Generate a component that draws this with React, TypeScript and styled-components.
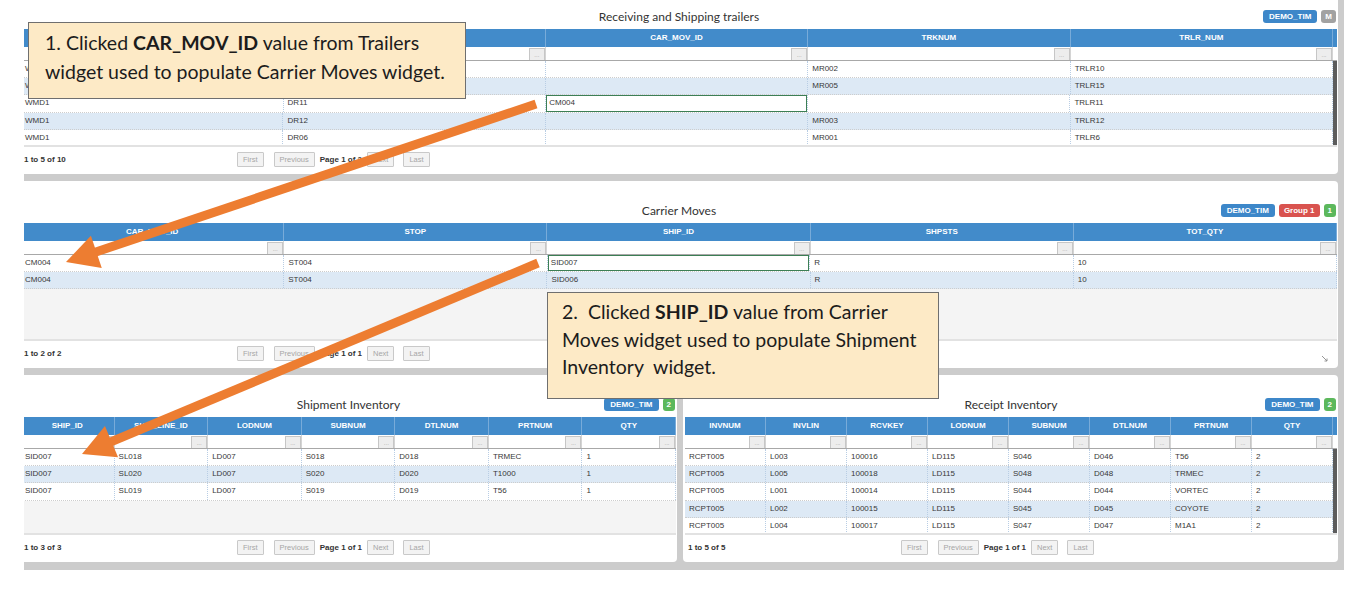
import React from "react";
import styled, { createGlobalStyle } from "styled-components";

const GlobalStyle = createGlobalStyle`
  html, body { margin: 0; padding: 0; background: #ffffff; }
  body { font-family: "Liberation Sans", Arial, sans-serif; }
  * { box-sizing: border-box; }
`;

const Page = styled.div`
  position: relative;
  width: 1357px;
  height: 592px;
  overflow: hidden;
  background: #ffffff;
`;

const Frame = styled.div`
  margin-left: 24px;
  width: 1320px;
  overflow: hidden;
  background: #cccccc;
  padding: 0 6px 8px 0;
`;

const Stack = styled.div`
  margin: -13px 0 0 -5px;
  display: flex;
  flex-direction: column;
  gap: 7px;
`;

const BottomRow = styled.div`
  display: grid;
  grid-template-columns: 658px 655px;
  gap: 6px;
`;

const PanelBox = styled.section`
  background: #ffffff;
  border-radius: 4px;
  height: 187px;
  padding: 0 1px 0 2px;
  display: flex;
  flex-direction: column;
`;

const TitleBar = styled.header`
  height: 42px;
  padding: 22px 1px 5px;
  display: grid;
  grid-template-columns: 1fr auto 1fr;
  align-items: center;
`;

const Title = styled.h2`
  grid-column: 2;
  margin: 0;
  font-family: Lato, "Open Sans", sans-serif;
  font-weight: 400;
  font-size: 12px;
  line-height: 15px;
  color: #333333;
  white-space: nowrap;
`;

const Badges = styled.div`
  grid-column: 3;
  justify-self: end;
  display: flex;
  gap: 4px;
`;

const toneColors: Record<string, string> = {
  blue: "#3d87c9",
  gray: "#a2a2a2",
  red: "#d9534f",
  green: "#5cb85c",
};

const Badge = styled.span<{ $tone: string; $pad: number }>`
  display: inline-block;
  height: 13px;
  padding: 0 ${(p) => p.$pad}px;
  border-radius: 3px;
  background: ${(p) => toneColors[p.$tone]};
  color: #ffffff;
  font-family: "Liberation Sans", Arial, sans-serif;
  font-weight: 700;
  font-size: 8px;
  line-height: 13px;
  white-space: nowrap;
`;

const Grid = styled.div`
  display: flex;
  flex-direction: column;
`;

const HeadRow = styled.div<{ $gutter: number }>`
  display: flex;
  height: 18px;
  background: #428bca;
  padding-right: ${(p) => p.$gutter}px;
`;

const HeadCell = styled.div`
  flex: 1 1 0;
  min-width: 0;
  text-align: center;
  color: #ffffff;
  font-weight: 700;
  font-size: 8px;
  line-height: 18px;
  border-right: 1px solid #78abd9;
  white-space: nowrap;
  overflow: hidden;
`;

const FilterRow = styled.div<{ $gutter: number }>`
  display: flex;
  height: 14px;
  background: #ffffff;
  border-bottom: 1px solid #a8a8a8;
  padding-right: ${(p) => p.$gutter}px;
`;

const FilterCell = styled.div`
  flex: 1 1 0;
  min-width: 0;
  display: flex;
  justify-content: flex-end;
  align-items: flex-end;
  border-right: 1px solid #d4d4d4;
`;

const DotsButton = styled.span`
  width: 16px;
  height: 12px;
  background: #ededed;
  border: 1px solid #c6c6c6;
  border-bottom: none;
  color: #9a9a9a;
  font-size: 6px;
  line-height: 13px;
  text-align: center;
`;

const Body = styled.div`
  display: flex;
  height: 86px;
  background: #f4f4f4;
  border-bottom: 2px solid #e2e2e2;
  overflow: hidden;
`;

const Rows = styled.div`
  flex: 1 1 0;
  min-width: 0;
  display: flex;
  flex-direction: column;
`;

const Scrollbar = styled.div`
  width: 4px;
  background: #5c5c5c;
`;

const Row = styled.div<{ $alt: boolean }>`
  display: flex;
  flex-shrink: 0;
  height: 17.2px;
  background: ${(p) => (p.$alt ? "#dde9f5" : "#ffffff")};
  border-bottom: 1px dotted #cdcdcd;
`;

const Cell = styled.div<{ $selected: boolean }>`
  flex: 1 1 0;
  min-width: 0;
  padding-left: 4px;
  font-size: 8px;
  line-height: 16px;
  color: #383838;
  white-space: nowrap;
  overflow: hidden;
  border-right: 1px dotted #b8cde4;
  ${(p) =>
    p.$selected
      ? `background: #ffffff; box-shadow: inset 0 0 0 1px #3c7f55; padding-left: 3px;`
      : ""}
`;

const Pager = styled.div`
  display: flex;
  align-items: center;
  height: 25px;
  padding-bottom: 1px;
`;

const Count = styled.span`
  width: 216px;
  flex-shrink: 0;
  padding-left: 3px;
  font-weight: 700;
  font-size: 8px;
  color: #333333;
  white-space: nowrap;
`;

const PagerButton = styled.span<{ $gap: number }>`
  height: 15px;
  padding: 0 5px;
  margin-right: ${(p) => p.$gap}px;
  border: 1px solid #c9c9c9;
  border-radius: 1px;
  background: #f3f3f3;
  color: #a6a6a6;
  font-size: 7.5px;
  line-height: 13px;
  white-space: nowrap;
`;

const PageLabel = styled.span`
  margin-right: 5px;
  font-weight: 700;
  font-size: 8px;
  color: #333333;
  white-space: nowrap;
`;

const ResizeGrip = styled.svg`
  margin-left: auto;
  margin-right: 9px;
  margin-top: 10px;
`;

const Callout = styled.div<{
  $x: number;
  $y: number;
  $w: number;
  $h: number;
  $lh: number;
  $pt: number;
  $pl: number;
}>`
  position: absolute;
  left: ${(p) => p.$x}px;
  top: ${(p) => p.$y}px;
  width: ${(p) => p.$w}px;
  height: ${(p) => p.$h}px;
  padding: ${(p) => p.$pt}px 4px 0 ${(p) => p.$pl}px;
  background: #fdeac6;
  border: 1px solid #6f6f6f;
  font-family: Lato, "Open Sans", sans-serif;
  font-size: 19.5px;
  line-height: ${(p) => p.$lh}px;
  color: #1c1c1c;
  white-space: pre;
  z-index: 3;
  b {
    font-weight: 700;
  }
`;

const ArrowLayer = styled.svg`
  position: absolute;
  left: 0;
  top: 0;
  z-index: 2;
  pointer-events: none;
`;

type PanelProps = {
  title: string;
  badges: { label: string; tone: string; pad: number }[];
  columns: string[];
  rows: string[][];
  selected?: [number, number];
  scroll?: boolean;
  count: string;
  page: string;
  resizable?: boolean;
};

function Panel({ title, badges, columns, rows, selected, scroll, count, page, resizable }: PanelProps) {
  const gutter = scroll ? 4 : 0;
  return (
    <PanelBox>
      <TitleBar>
        <Title>{title}</Title>
        <Badges>
          {badges.map((b) => (
            <Badge key={b.label} $tone={b.tone} $pad={b.pad}>
              {b.label}
            </Badge>
          ))}
        </Badges>
      </TitleBar>
      <Grid>
        <HeadRow $gutter={gutter}>
          {columns.map((c) => (
            <HeadCell key={c}>{c}</HeadCell>
          ))}
        </HeadRow>
        <FilterRow $gutter={gutter}>
          {columns.map((c) => (
            <FilterCell key={c}>
              <DotsButton>...</DotsButton>
            </FilterCell>
          ))}
        </FilterRow>
        <Body>
          <Rows>
            {rows.map((r, ri) => (
              <Row key={ri} $alt={ri % 2 === 1}>
                {r.map((v, ci) => (
                  <Cell key={ci} $selected={!!selected && selected[0] === ri && selected[1] === ci}>
                    {v}
                  </Cell>
                ))}
              </Row>
            ))}
          </Rows>
          {scroll && <Scrollbar />}
        </Body>
      </Grid>
      <Pager>
        <Count>{count}</Count>
        <PagerButton $gap={10}>First</PagerButton>
        <PagerButton $gap={5}>Previous</PagerButton>
        <PageLabel>{page}</PageLabel>
        <PagerButton $gap={9}>Next</PagerButton>
        <PagerButton $gap={0}>Last</PagerButton>
        {resizable && (
          <ResizeGrip width="7" height="7" viewBox="0 0 7 7">
            <path d="M1 1 L6 6 M3.5 6 L6 6 L6 3.5" stroke="#8a8a8a" strokeWidth="0.9" fill="none" />
          </ResizeGrip>
        )}
      </Pager>
    </PanelBox>
  );
}

function arrowGeometry(sx: number, sy: number, tx: number, ty: number, hl: number, hw: number) {
  const dx = tx - sx;
  const dy = ty - sy;
  const len = Math.hypot(dx, dy);
  const ux = dx / len;
  const uy = dy / len;
  const bx = tx - ux * hl;
  const by = ty - uy * hl;
  const px = -uy;
  const py = ux;
  return {
    line: { x1: sx, y1: sy, x2: bx + ux * 2, y2: by + uy * 2 },
    head: `${tx},${ty} ${bx + px * hw},${by + py * hw} ${bx - px * hw},${by - py * hw}`,
  };
}

function Arrow({ sx, sy, tx, ty }: { sx: number; sy: number; tx: number; ty: number }) {
  const g = arrowGeometry(sx, sy, tx, ty, 32, 17);
  return (
    <g>
      <line {...g.line} stroke="#ed7d31" strokeWidth={9} />
      <polygon points={g.head} fill="#ed7d31" />
    </g>
  );
}

const trailers = {
  columns: ["WH_ID", "DOOR", "CAR_MOV_ID", "TRKNUM", "TRLR_NUM"],
  rows: [
    ["WMD1", "DR10", "", "MR002", "TRLR10"],
    ["WMD1", "DR15", "", "MR005", "TRLR15"],
    ["WMD1", "DR11", "CM004", "", "TRLR11"],
    ["WMD1", "DR12", "", "MR003", "TRLR12"],
    ["WMD1", "DR06", "", "MR001", "TRLR6"],
  ],
};

const moves = {
  columns: ["CAR_MOV_ID", "STOP", "SHIP_ID", "SHPSTS", "TOT_QTY"],
  rows: [
    ["CM004", "ST004", "SID007", "R", "10"],
    ["CM004", "ST004", "SID006", "R", "10"],
  ],
};

const shipment = {
  columns: ["SHIP_ID", "SHIP_LINE_ID", "LODNUM", "SUBNUM", "DTLNUM", "PRTNUM", "QTY"],
  rows: [
    ["SID007", "SL018", "LD007", "S018", "D018", "TRMEC", "1"],
    ["SID007", "SL020", "LD007", "S020", "D020", "T1000", "1"],
    ["SID007", "SL019", "LD007", "S019", "D019", "T56", "1"],
  ],
};

const receipt = {
  columns: ["INVNUM", "INVLIN", "RCVKEY", "LODNUM", "SUBNUM", "DTLNUM", "PRTNUM", "QTY"],
  rows: [
    ["RCPT005", "L003", "100016", "LD115", "S046", "D046", "T56", "2"],
    ["RCPT005", "L005", "100018", "LD115", "S048", "D048", "TRMEC", "2"],
    ["RCPT005", "L001", "100014", "LD115", "S044", "D044", "VORTEC", "2"],
    ["RCPT005", "L002", "100015", "LD115", "S045", "D045", "COYOTE", "2"],
    ["RCPT005", "L004", "100017", "LD115", "S047", "D047", "M1A1", "2"],
  ],
};

export default function App() {
  return (
    <>
      <GlobalStyle />
      <Page>
        <Frame>
          <Stack>
            <Panel
              title="Receiving and Shipping trailers"
              badges={[
                { label: "DEMO_TIM", tone: "blue", pad: 6 },
                { label: "M", tone: "gray", pad: 4 },
              ]}
              columns={trailers.columns}
              rows={trailers.rows}
              selected={[2, 2]}
              scroll
              count="1 to 5 of 10"
              page="Page 1 of 2"
            />
            <Panel
              title="Carrier Moves"
              badges={[
                { label: "DEMO_TIM", tone: "blue", pad: 6 },
                { label: "Group 1", tone: "red", pad: 5 },
                { label: "1", tone: "green", pad: 4 },
              ]}
              columns={moves.columns}
              rows={moves.rows}
              selected={[0, 2]}
              count="1 to 2 of 2"
              page="Page 1 of 1"
              resizable
            />
            <BottomRow>
              <Panel
                title="Shipment Inventory"
                badges={[
                  { label: "DEMO_TIM", tone: "blue", pad: 6 },
                  { label: "2", tone: "green", pad: 4 },
                ]}
                columns={shipment.columns}
                rows={shipment.rows}
                count="1 to 3 of 3"
                page="Page 1 of 1"
              />
              <Panel
                title="Receipt Inventory"
                badges={[
                  { label: "DEMO_TIM", tone: "blue", pad: 6 },
                  { label: "2", tone: "green", pad: 4 },
                ]}
                columns={receipt.columns}
                rows={receipt.rows}
                scroll
                count="1 to 5 of 5"
                page="Page 1 of 1"
              />
            </BottomRow>
          </Stack>
        </Frame>

        <ArrowLayer width="1357" height="592" viewBox="0 0 1357 592">
          <Arrow sx={536} sy={104} tx={66} ty={262} />
          <Arrow sx={538} sy={263} tx={82} ty={454} />
        </ArrowLayer>

        <Callout $x={28} $y={22} $w={438} $h={77} $lh={29} $pt={5} $pl={16}>
          {"1. Clicked "}
          <b>CAR_MOV_ID</b>
          {" value from Trailers\nwidget used to populate Carrier Moves widget."}
        </Callout>

        <Callout $x={547} $y={292} $w={392} $h={107} $lh={27.5} $pt={5} $pl={14}>
          {"2.  Clicked "}
          <b>SHIP_ID</b>
          {" value from Carrier\nMoves widget used to populate Shipment\nInventory  widget."}
        </Callout>
      </Page>
    </>
  );
}
